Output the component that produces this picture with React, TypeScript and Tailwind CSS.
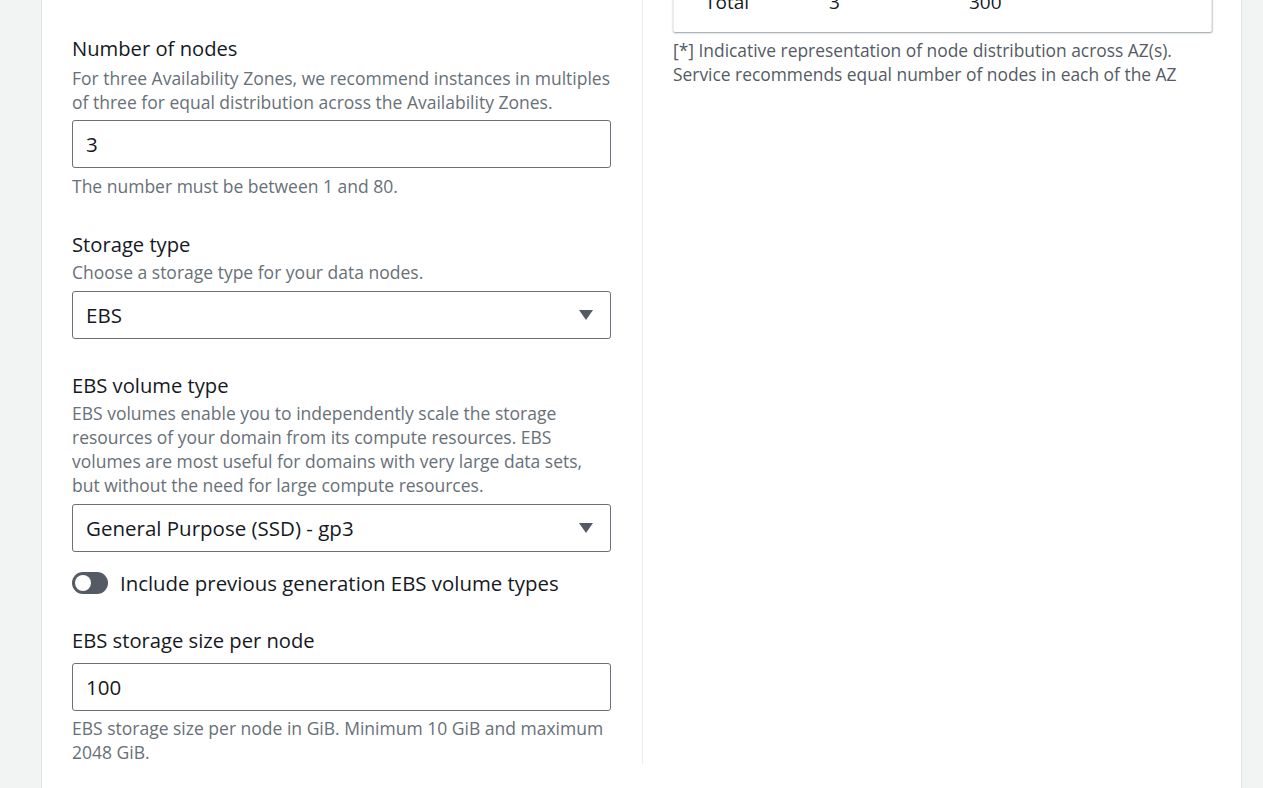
import React from "react";

const font = { fontFamily: '"Open Sans", "Noto Sans", sans-serif' };

function Caret() {
  return (
    <svg width="16" height="12" viewBox="0 0 16 12" className="shrink-0">
      <path d="M1 1 H15 L8 11 Z" fill="#545b64" />
    </svg>
  );
}

function TextInput({ value }: { value: string }) {
  return (
    <div className="h-[48px] w-full border border-[#687078] rounded-[3px] flex items-center px-[13px] text-[20.5px] text-[#16191f]">
      {value}
    </div>
  );
}

function Select({ value }: { value: string }) {
  return (
    <div className="h-[48px] w-full border border-[#687078] rounded-[3px] flex items-center justify-between pl-[13px] pr-[16px] text-[20.5px] text-[#16191f]">
      <span>{value}</span>
      <Caret />
    </div>
  );
}

export default function App() {
  return (
    <div className="h-[788px] w-[1263px] overflow-hidden bg-[#f2f3f3] flex pl-[41px] pr-[21px]" style={font}>
      <div className="flex-1 bg-white border-l border-r border-[#e1e4e4] flex">
        {/* left column */}
        <div className="w-[601px] h-[764px] pl-[30px] pr-[31px] pt-[35px] border-r border-[#e9ebed]">
          <div className="text-[20.2px] leading-[26px] text-[#16191f]">Number of nodes</div>
          <p className="mt-[5px] text-[17.5px] leading-[24px] text-[#687078]">
            For three Availability Zones, we recommend instances in multiples of three for equal distribution across the Availability Zones.
          </p>
          <div className="mt-[6px]">
            <TextInput value="3" />
          </div>
          <p className="mt-[6px] text-[17.5px] leading-[24px] text-[#687078]">The number must be between 1 and 80.</p>

          <div className="mt-[33px] text-[20.2px] leading-[26px] text-[#16191f]">Storage type</div>
          <p className="mt-[3px] text-[17.5px] leading-[24px] text-[#687078]">Choose a storage type for your data nodes.</p>
          <div className="mt-[7px]">
            <Select value="EBS" />
          </div>

          <div className="mt-[33px] text-[20.2px] leading-[26px] text-[#16191f]">EBS volume type</div>
          <p className="mt-[3px] text-[17.5px] leading-[24px] text-[#687078]">
            EBS volumes enable you to independently scale the storage resources of your domain from its compute resources. EBS volumes are most useful for domains with very large data sets, but without the need for large compute resources.
          </p>
          <div className="mt-[7px]">
            <Select value="General Purpose (SSD) - gp3" />
          </div>

          <div className="mt-[19px] flex items-center gap-[12px] h-[24px]">
            <div className="w-[36px] h-[22px] rounded-full bg-[#545b64] flex items-center pl-[3px]">
              <div className="w-[16px] h-[16px] rounded-full bg-white" />
            </div>
            <span className="text-[20.4px] text-[#16191f]">Include previous generation EBS volume types</span>
          </div>

          <div className="mt-[32px] text-[20.2px] leading-[26px] text-[#16191f]">EBS storage size per node</div>
          <div className="mt-[10px]">
            <TextInput value="100" />
          </div>
          <p className="mt-[5px] text-[17.5px] leading-[24px] text-[#687078]">
            EBS storage size per node in GiB. Minimum 10 GiB and maximum 2048 GiB.
          </p>
        </div>

        {/* right column */}
        <div className="pl-[30px]">
          <div className="w-[539px] -mt-[20px] bg-white rounded-b-[2px] shadow-[0_1px_2px_rgba(0,28,36,0.35),1px_1px_1px_rgba(0,28,36,0.1)] border-x border-[#eaeded]">
            <div className="flex h-[52px] items-center pb-[8px] text-[19px] text-[#16191f]">
              <span className="w-[155px] pl-[31px]">Total</span>
              <span className="w-[140px]">3</span>
              <span>300</span>
            </div>
          </div>
          <p className="mt-[6px] text-[17.4px] leading-[24px] text-[#545b64]">
            [*] Indicative representation of node distribution across AZ(s).
            <br />
            Service recommends equal number of nodes in each of the AZ
          </p>
        </div>
      </div>
    </div>
  );
}
